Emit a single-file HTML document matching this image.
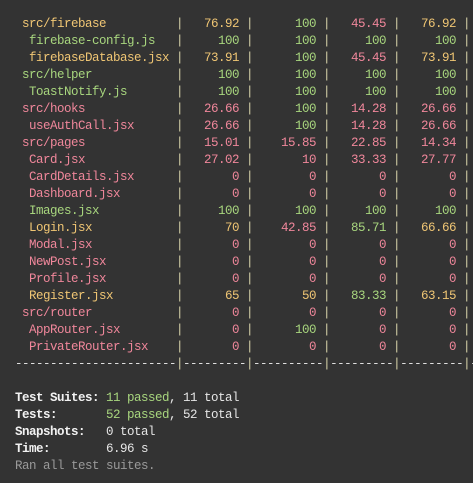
<!DOCTYPE html>
<html><head><meta charset="utf-8"><style>
html,body{margin:0;padding:0;background:#333333;width:473px;height:483px;overflow:hidden}
#t{position:absolute;left:15px;top:16px;font-family:"Liberation Mono",monospace;font-size:12.5px;letter-spacing:-0.5px;line-height:17px;color:#e6e6e6;white-space:normal}
.r{height:17px;white-space:pre}
.r span{display:inline-block;vertical-align:top}
.n{width:161px;padding-left:7px;box-sizing:border-box}
.f{padding-left:14px}
.p{width:7px;color:#d6d2a8}
.c{width:63px;text-align:right;padding-right:7px;box-sizing:border-box}
.b{width:70px}
.g{color:#a8d67e}.y{color:#f0c674}.k{color:#f0879b}
.d{color:#e0e0e0}
.w{color:#f2f2f2;font-weight:bold}
.gr{color:#9a9a9a}
</style></head><body><div id="t"><div class="r"><span class="n y">src/firebase</span><span class="p">|</span><span class="c y">76.92</span><span class="p">|</span><span class="c b g">100</span><span class="p">|</span><span class="c k">45.45</span><span class="p">|</span><span class="c y">76.92</span><span class="p">|</span></div>
<div class="r"><span class="n f g">firebase-config.js</span><span class="p">|</span><span class="c g">100</span><span class="p">|</span><span class="c b g">100</span><span class="p">|</span><span class="c g">100</span><span class="p">|</span><span class="c g">100</span><span class="p">|</span></div>
<div class="r"><span class="n f y">firebaseDatabase.jsx</span><span class="p">|</span><span class="c y">73.91</span><span class="p">|</span><span class="c b g">100</span><span class="p">|</span><span class="c k">45.45</span><span class="p">|</span><span class="c y">73.91</span><span class="p">|</span></div>
<div class="r"><span class="n g">src/helper</span><span class="p">|</span><span class="c g">100</span><span class="p">|</span><span class="c b g">100</span><span class="p">|</span><span class="c g">100</span><span class="p">|</span><span class="c g">100</span><span class="p">|</span></div>
<div class="r"><span class="n f g">ToastNotify.js</span><span class="p">|</span><span class="c g">100</span><span class="p">|</span><span class="c b g">100</span><span class="p">|</span><span class="c g">100</span><span class="p">|</span><span class="c g">100</span><span class="p">|</span></div>
<div class="r"><span class="n k">src/hooks</span><span class="p">|</span><span class="c k">26.66</span><span class="p">|</span><span class="c b g">100</span><span class="p">|</span><span class="c k">14.28</span><span class="p">|</span><span class="c k">26.66</span><span class="p">|</span></div>
<div class="r"><span class="n f k">useAuthCall.jsx</span><span class="p">|</span><span class="c k">26.66</span><span class="p">|</span><span class="c b g">100</span><span class="p">|</span><span class="c k">14.28</span><span class="p">|</span><span class="c k">26.66</span><span class="p">|</span></div>
<div class="r"><span class="n k">src/pages</span><span class="p">|</span><span class="c k">15.01</span><span class="p">|</span><span class="c b k">15.85</span><span class="p">|</span><span class="c k">22.85</span><span class="p">|</span><span class="c k">14.34</span><span class="p">|</span></div>
<div class="r"><span class="n f k">Card.jsx</span><span class="p">|</span><span class="c k">27.02</span><span class="p">|</span><span class="c b k">10</span><span class="p">|</span><span class="c k">33.33</span><span class="p">|</span><span class="c k">27.77</span><span class="p">|</span></div>
<div class="r"><span class="n f k">CardDetails.jsx</span><span class="p">|</span><span class="c k">0</span><span class="p">|</span><span class="c b k">0</span><span class="p">|</span><span class="c k">0</span><span class="p">|</span><span class="c k">0</span><span class="p">|</span></div>
<div class="r"><span class="n f k">Dashboard.jsx</span><span class="p">|</span><span class="c k">0</span><span class="p">|</span><span class="c b k">0</span><span class="p">|</span><span class="c k">0</span><span class="p">|</span><span class="c k">0</span><span class="p">|</span></div>
<div class="r"><span class="n f g">Images.jsx</span><span class="p">|</span><span class="c g">100</span><span class="p">|</span><span class="c b g">100</span><span class="p">|</span><span class="c g">100</span><span class="p">|</span><span class="c g">100</span><span class="p">|</span></div>
<div class="r"><span class="n f y">Login.jsx</span><span class="p">|</span><span class="c y">70</span><span class="p">|</span><span class="c b k">42.85</span><span class="p">|</span><span class="c g">85.71</span><span class="p">|</span><span class="c y">66.66</span><span class="p">|</span></div>
<div class="r"><span class="n f k">Modal.jsx</span><span class="p">|</span><span class="c k">0</span><span class="p">|</span><span class="c b k">0</span><span class="p">|</span><span class="c k">0</span><span class="p">|</span><span class="c k">0</span><span class="p">|</span></div>
<div class="r"><span class="n f k">NewPost.jsx</span><span class="p">|</span><span class="c k">0</span><span class="p">|</span><span class="c b k">0</span><span class="p">|</span><span class="c k">0</span><span class="p">|</span><span class="c k">0</span><span class="p">|</span></div>
<div class="r"><span class="n f k">Profile.jsx</span><span class="p">|</span><span class="c k">0</span><span class="p">|</span><span class="c b k">0</span><span class="p">|</span><span class="c k">0</span><span class="p">|</span><span class="c k">0</span><span class="p">|</span></div>
<div class="r"><span class="n f y">Register.jsx</span><span class="p">|</span><span class="c y">65</span><span class="p">|</span><span class="c b y">50</span><span class="p">|</span><span class="c g">83.33</span><span class="p">|</span><span class="c y">63.15</span><span class="p">|</span></div>
<div class="r"><span class="n k">src/router</span><span class="p">|</span><span class="c k">0</span><span class="p">|</span><span class="c b k">0</span><span class="p">|</span><span class="c k">0</span><span class="p">|</span><span class="c k">0</span><span class="p">|</span></div>
<div class="r"><span class="n f k">AppRouter.jsx</span><span class="p">|</span><span class="c k">0</span><span class="p">|</span><span class="c b g">100</span><span class="p">|</span><span class="c k">0</span><span class="p">|</span><span class="c k">0</span><span class="p">|</span></div>
<div class="r"><span class="n f k">PrivateRouter.jsx</span><span class="p">|</span><span class="c k">0</span><span class="p">|</span><span class="c b k">0</span><span class="p">|</span><span class="c k">0</span><span class="p">|</span><span class="c k">0</span><span class="p">|</span></div>
<div class="r"><span class="d">-----------------------</span><span class="p">|</span><span class="d">---------</span><span class="p">|</span><span class="d">----------</span><span class="p">|</span><span class="d">---------</span><span class="p">|</span><span class="d">---------</span><span class="p">|</span><span class="d">-</span></div>
<div class="r"> </div>
<div class="r"><span class="w">Test Suites: </span><span class="g">11 passed</span>, 11 total</div>
<div class="r"><span class="w">Tests:       </span><span class="g">52 passed</span>, 52 total</div>
<div class="r"><span class="w">Snapshots:   </span>0 total</div>
<div class="r"><span class="w">Time:        </span>6.96 s</div>
<div class="r gr">Ran all test suites.</div></div></body></html>
